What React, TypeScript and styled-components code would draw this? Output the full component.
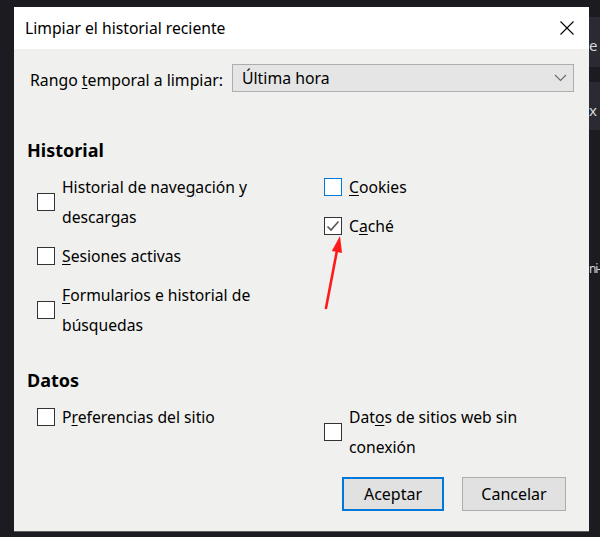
import React from "react";
import styled, { createGlobalStyle } from "styled-components";

const GlobalStyle = createGlobalStyle`
  html, body {
    margin: 0;
    padding: 0;
    background: #1c1b22;
  }
  body {
    font-family: "Noto Sans", "Open Sans", sans-serif;
    color: #000;
  }
`;

const Page = styled.div`
  width: 600px;
  height: 537px;
  display: flex;
  overflow: hidden;
  background: #1c1b22;
`;

const Dialog = styled.div`
  position: relative;
  flex-shrink: 0;
  width: 575px;
  height: 525px;
  margin: 7px 0 0 14px;
  box-sizing: border-box;
  background: #f0f0ee;
  border-bottom: 1px solid #5f5f5f;
  display: flex;
  flex-direction: column;
`;

const TitleBar = styled.div`
  height: 42px;
  flex-shrink: 0;
  background: #ffffff;
  display: flex;
  align-items: center;
  justify-content: space-between;
  padding: 0 14px 0 11px;
  font-size: 15.7px;
`;

const CloseButton = styled.button`
  width: 16px;
  height: 16px;
  padding: 0;
  border: none;
  background: transparent;
  display: flex;
  align-items: center;
  justify-content: center;
`;

const Body = styled.div`
  padding: 15px 15px 0 13px;
  display: flex;
  flex-direction: column;
`;

const RangeRow = styled.div`
  display: flex;
  align-items: center;
  justify-content: space-between;
  font-size: 15.8px;
`;

const RangeLabel = styled.span`
  padding-left: 3px;
  margin-top: 3px;
`;

const Select = styled.div`
  width: 342px;
  height: 28px;
  box-sizing: border-box;
  border: 1px solid #adadad;
  background: #e5e5e5;
  display: flex;
  align-items: center;
  justify-content: space-between;
  padding: 0 6px 0 9px;
  font-size: 15.8px;
`;

const SectionTitle = styled.h2<{ $top: number }>`
  margin: ${(p) => p.$top}px 0 0 0;
  height: 24px;
  line-height: 24px;
  font-size: 18px;
  font-weight: 700;
`;

const Columns = styled.div`
  display: grid;
  grid-template-columns: 287px 1fr;
  align-items: start;
  margin-top: 10px;
  padding-left: 10px;
`;

const OptionList = styled.div`
  display: flex;
  flex-direction: column;
  gap: 9px;
`;

const Option = styled.label`
  display: flex;
  align-items: center;
  gap: 7px;
  font-size: 15.7px;
  line-height: 30px;
`;

const Box = styled.span<{ $focused?: boolean }>`
  width: 18px;
  height: 18px;
  flex-shrink: 0;
  box-sizing: border-box;
  background: #ffffff;
  border: 1px solid ${(p) => (p.$focused ? "#0078d7" : "#333333")};
  display: flex;
  align-items: center;
  justify-content: center;
`;

const Key = styled.span`
  text-decoration: underline;
  text-underline-offset: 2px;
`;

const ButtonRow = styled.div`
  display: flex;
  justify-content: flex-end;
  gap: 18px;
  margin-top: 15px;
  padding-right: 8px;
`;

const Button = styled.button<{ $primary?: boolean; $width: number }>`
  width: ${(p) => p.$width}px;
  height: 34px;
  box-sizing: border-box;
  background: #e1e1e1;
  border: ${(p) => (p.$primary ? "2px solid #0078d7" : "1px solid #adadad")};
  font-family: inherit;
  font-size: 16px;
  color: #000;
  padding: 0;
`;

const Arrow = styled.svg`
  position: absolute;
  left: 305px;
  top: 227px;
`;

const Strip = styled.div`
  width: 11px;
  flex-shrink: 0;
  display: flex;
  flex-direction: column;
  overflow: hidden;
`;

const StripBlock = styled.div<{ $h: number; $light?: boolean; $pad?: number }>`
  height: ${(p) => p.$h}px;
  flex-shrink: 0;
  box-sizing: border-box;
  background: ${(p) => (p.$light ? "#2b2a33" : "#1c1b22")};
  padding-top: ${(p) => p.$pad ?? 0}px;
  color: #d6d6da;
  font-size: 15px;
  line-height: 20px;
  white-space: nowrap;
`;

const StripText = styled.span`
  font-size: 12px;
  letter-spacing: -1.2px;
`;

function Check({ checked, focused }: { checked?: boolean; focused?: boolean }) {
  return (
    <Box $focused={focused}>
      {checked && (
        <svg width="14" height="12" viewBox="0 0 14 12">
          <path d="M1.5 6.5 L5 10 L12.5 1.5" fill="none" stroke="#555" strokeWidth="1.6" />
        </svg>
      )}
    </Box>
  );
}

export default function App() {
  return (
    <>
      <GlobalStyle />
      <Page>
        <Dialog>
          <TitleBar>
            <span>Limpiar el historial reciente</span>
            <CloseButton aria-label="Cerrar">
              <svg width="14" height="14" viewBox="0 0 14 14">
                <path d="M0.5 0.5 L13.5 13.5 M13.5 0.5 L0.5 13.5" stroke="#000" strokeWidth="1.1" />
              </svg>
            </CloseButton>
          </TitleBar>
          <Body>
            <RangeRow>
              <RangeLabel>
                Rango <Key>t</Key>emporal a limpiar:
              </RangeLabel>
              <Select>
                <span>Última hora</span>
                <svg width="13" height="8" viewBox="0 0 13 8">
                  <path d="M1 1 L6.5 6.5 L12 1" fill="none" stroke="#6a6a6a" strokeWidth="1.1" />
                </svg>
              </Select>
            </RangeRow>

            <SectionTitle $top={46}>Historial</SectionTitle>
            <Columns>
              <OptionList>
                <Option>
                  <Check />
                  <span>
                    Historial de nave<Key>g</Key>ación y
                    <br />
                    descargas
                  </span>
                </Option>
                <Option>
                  <Check />
                  <span>
                    <Key>S</Key>esiones activas
                  </span>
                </Option>
                <Option>
                  <Check />
                  <span>
                    <Key>F</Key>ormularios e historial de
                    <br />
                    búsquedas
                  </span>
                </Option>
              </OptionList>
              <OptionList>
                <Option>
                  <Check focused />
                  <span>
                    <Key>C</Key>ookies
                  </span>
                </Option>
                <Option>
                  <Check checked />
                  <span>
                    C<Key>a</Key>ché
                  </span>
                </Option>
              </OptionList>
            </Columns>

            <SectionTitle $top={28}>Datos</SectionTitle>
            <Columns>
              <OptionList>
                <Option>
                  <Check />
                  <span>
                    P<Key>r</Key>eferencias del sitio
                  </span>
                </Option>
              </OptionList>
              <OptionList>
                <Option>
                  <Check />
                  <span>
                    Dat<Key>o</Key>s de sitios web sin
                    <br />
                    conexión
                  </span>
                </Option>
              </OptionList>
            </Columns>

            <ButtonRow>
              <Button $primary $width={102}>
                Aceptar
              </Button>
              <Button $width={104}>Cancelar</Button>
            </ButtonRow>
          </Body>

          <Arrow width="28" height="78" viewBox="0 0 28 78">
            <path d="M7 74 L17.6 18.5" stroke="#ff1a1a" strokeWidth="2.6" strokeLinecap="round" />
            <path d="M21 2 L23 19 L12.8 17 Z" fill="#ff1a1a" />
          </Arrow>
        </Dialog>

        <Strip>
          <StripBlock $h={17} />
          <StripBlock $h={50} $light $pad={18}>
            e
          </StripBlock>
          <StripBlock $h={15} />
          <StripBlock $h={48} $light $pad={18}>
            x
          </StripBlock>
          <StripBlock $h={407} $pad={127}>
            <StripText>ni-</StripText>
          </StripBlock>
        </Strip>
      </Page>
    </>
  );
}
